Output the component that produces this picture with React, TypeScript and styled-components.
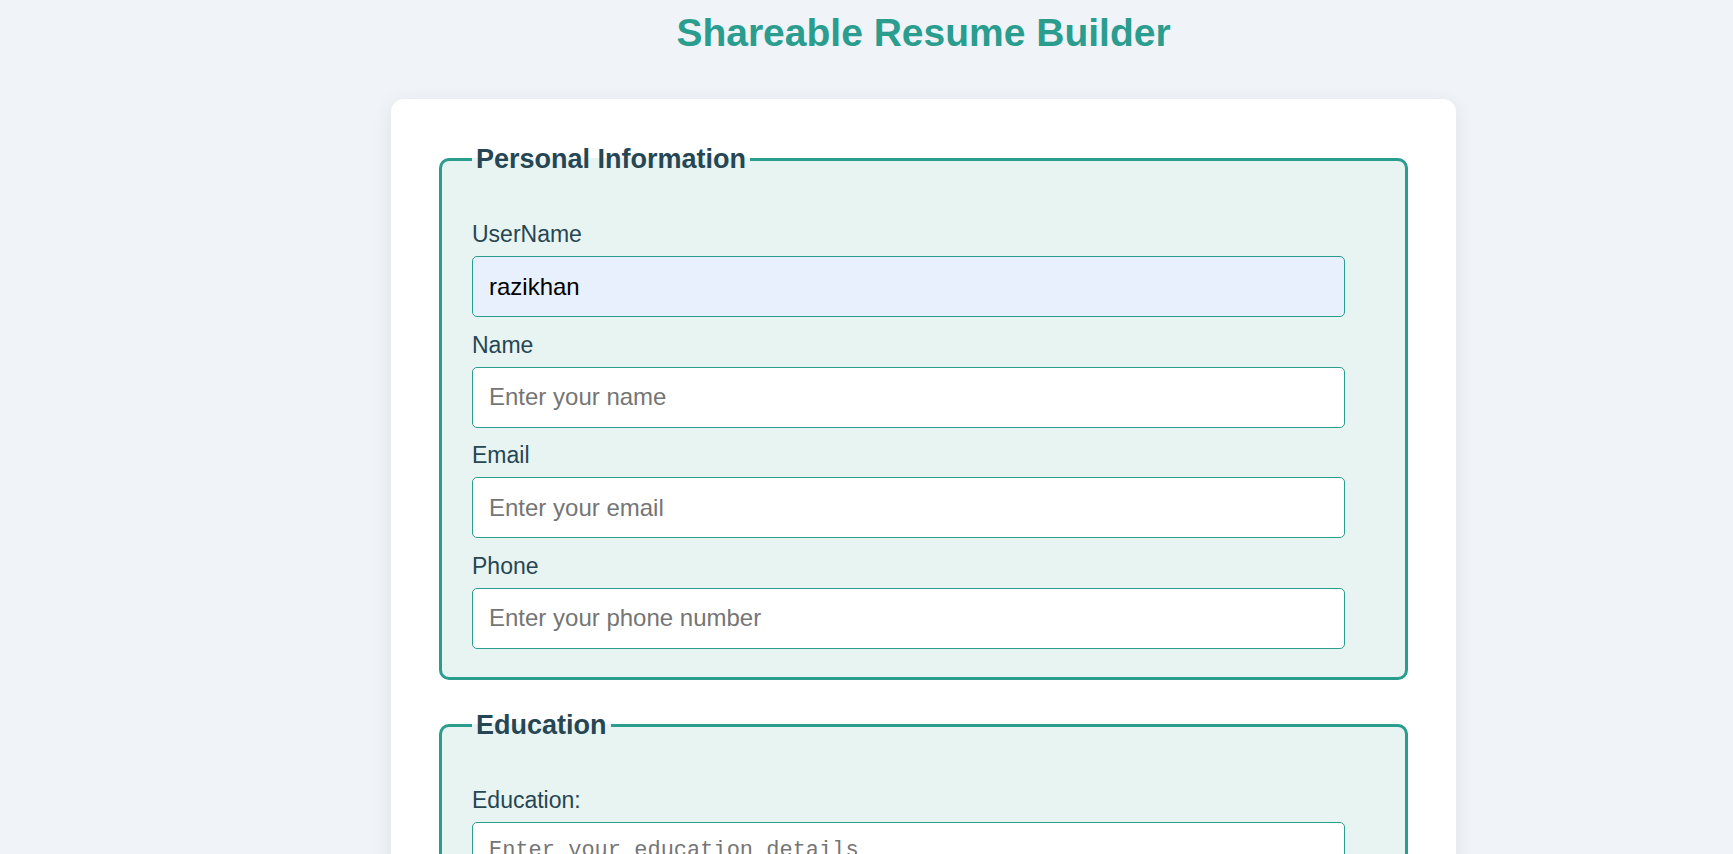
import React from "react";
import styled, { createGlobalStyle } from "styled-components";

const GlobalStyle = createGlobalStyle`
  html, body {
    margin: 0;
    padding: 0;
    scrollbar-width: none;
  }
  html::-webkit-scrollbar, body::-webkit-scrollbar {
    display: none;
  }
  body {
    background: #f0f4f8;
    font-family: "Liberation Sans", Arial, sans-serif;
    color: #264653;
  }
`;

const Page = styled.div`
  box-sizing: border-box;
  padding: 11px 0 48px 114px;
`;

const Title = styled.h1`
  margin: 0 0 44px;
  text-align: center;
  font-size: 39px;
  font-weight: bold;
  color: #2a9d8f;
`;

const Card = styled.form`
  box-sizing: border-box;
  width: 1065px;
  margin: 0 auto;
  padding: 45px 48px 48px;
  background: #ffffff;
  border-radius: 13px;
  box-shadow: 0 4px 20px rgba(0, 0, 0, 0.08);
`;

const Section = styled.fieldset`
  min-width: 0;
  margin: 0 0 30px;
  padding: 46px 60px 14px 30px;
  border: 3px solid #2a9d8f;
  border-radius: 10px;
  background: #e8f4f2;
`;

const Legend = styled.legend`
  padding: 0 4px;
  font-size: 27px;
  font-weight: bold;
  color: #264653;
`;

const Label = styled.label`
  display: block;
  margin-bottom: 8px;
  font-size: 23px;
  color: #264653;
`;

const Input = styled.input<{ $autofilled?: boolean }>`
  display: block;
  box-sizing: border-box;
  width: 100%;
  margin: 0 0 14.5px;
  padding: 15.5px 16px;
  border: 1px solid #2a9d8f;
  border-radius: 5px;
  background: ${(p) => (p.$autofilled ? "#e8f0fe" : "#ffffff")};
  font-family: "Liberation Sans", Arial, sans-serif;
  font-size: 24px;
  color: #000000;
  outline: none;

  &::placeholder {
    color: #757575;
  }
`;

const TextArea = styled.textarea`
  display: block;
  box-sizing: border-box;
  width: 100%;
  margin: 0 0 14.5px;
  padding: 15px 16px;
  border: 1px solid #2a9d8f;
  border-radius: 5px;
  background: #ffffff;
  font-family: "Liberation Mono", "DejaVu Sans Mono", monospace;
  font-size: 22px;
  color: #000000;
  resize: vertical;
  outline: none;

  &::placeholder {
    color: #757575;
  }
`;

const SubmitButton = styled.button`
  display: block;
  width: 100%;
  padding: 15px;
  border: none;
  border-radius: 6px;
  background: #2a9d8f;
  color: #ffffff;
  font-family: "Liberation Sans", Arial, sans-serif;
  font-size: 22px;
  font-weight: bold;
  cursor: pointer;
`;

type Field = {
  id: string;
  label: string;
  type: string;
  placeholder: string;
  value?: string;
};

const personalFields: Field[] = [
  { id: "username", label: "UserName", type: "text", placeholder: "Enter your username", value: "razikhan" },
  { id: "name", label: "Name", type: "text", placeholder: "Enter your name" },
  { id: "email", label: "Email", type: "email", placeholder: "Enter your email" },
  { id: "phone", label: "Phone", type: "tel", placeholder: "Enter your phone number" },
];

export default function App() {
  return (
    <>
      <GlobalStyle />
      <Page>
        <Title>Shareable Resume Builder</Title>
        <Card onSubmit={(e) => e.preventDefault()}>
          <Section>
            <Legend>Personal Information</Legend>
            {personalFields.map((f) => (
              <React.Fragment key={f.id}>
                <Label htmlFor={f.id}>{f.label}</Label>
                <Input
                  id={f.id}
                  type={f.type}
                  placeholder={f.placeholder}
                  defaultValue={f.value}
                  $autofilled={!!f.value}
                />
              </React.Fragment>
            ))}
          </Section>
          <Section>
            <Legend>Education</Legend>
            <Label htmlFor="education">Education:</Label>
            <TextArea id="education" rows={4} placeholder="Enter your education details" />
          </Section>
          <Section>
            <Legend>Work Experience</Legend>
            <Label htmlFor="experience">Experience:</Label>
            <TextArea id="experience" rows={4} placeholder="Enter your work experience" />
          </Section>
          <Section>
            <Legend>Skills</Legend>
            <Label htmlFor="skills">Skills:</Label>
            <TextArea id="skills" rows={4} placeholder="Enter your skills" />
          </Section>
          <SubmitButton type="submit">Generate Resume</SubmitButton>
        </Card>
      </Page>
    </>
  );
}
